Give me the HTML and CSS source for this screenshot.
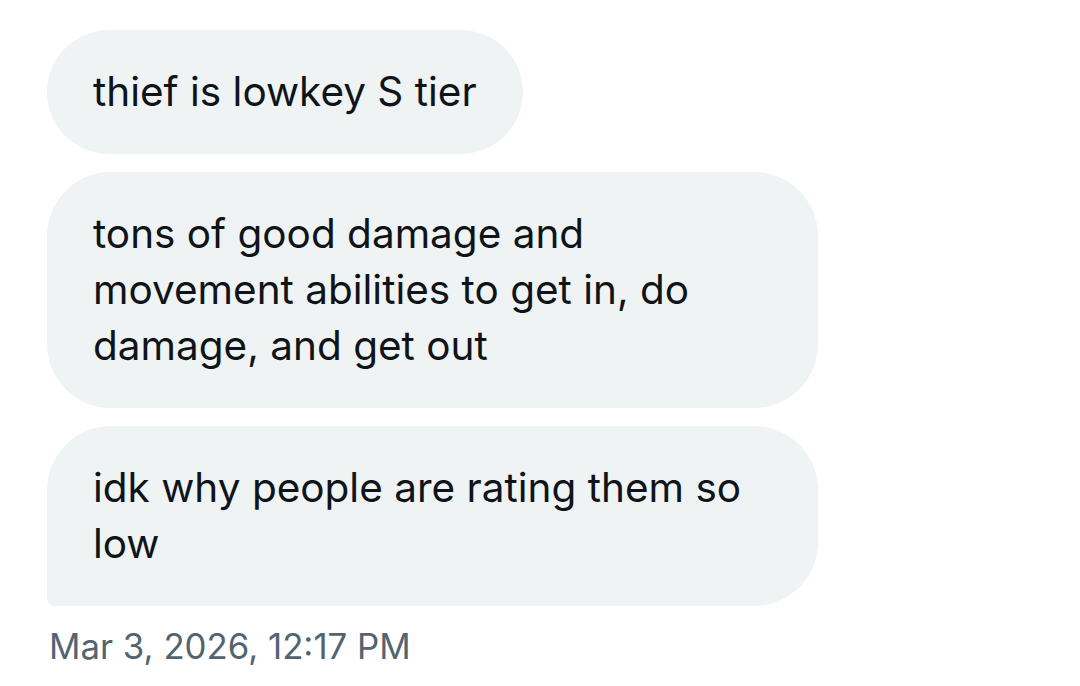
FILE: index.html
```html
<!DOCTYPE html>
<html>
<head>
<meta charset="utf-8">
<link rel="stylesheet" href="styles.css">
</head>
<body>
<div class="thread">
  <div class="bubble">thief is lowkey S tier</div>
  <div class="bubble">tons of good damage and movement abilities to get in, do damage, and get out</div>
  <div class="bubble last">idk why people are rating them so low</div>
  <div class="time">Mar 3, 2026, 12:17 PM</div>
</div>
</body>
</html>
```
FILE: styles.css
```css
html, body {
  margin: 0;
  background: #ffffff;
}
.thread {
  display: flex;
  flex-direction: column;
  align-items: flex-start;
  gap: 18px;
  padding: 30px 0 0 47px;
  font-family: Inter, "Noto Sans", sans-serif;
}
.bubble {
  box-sizing: border-box;
  max-width: 771px;
  padding: 34px 46px;
  background: #eff3f4;
  color: #0f1419;
  font-size: 40.5px;
  line-height: 56px;
  border-radius: 64px;
}
.bubble.last {
  border-bottom-left-radius: 8px;
}
.time {
  margin-top: 0;
  padding-left: 2px;
  color: #536471;
  font-size: 34.8px;
  line-height: 44px;
}
```
